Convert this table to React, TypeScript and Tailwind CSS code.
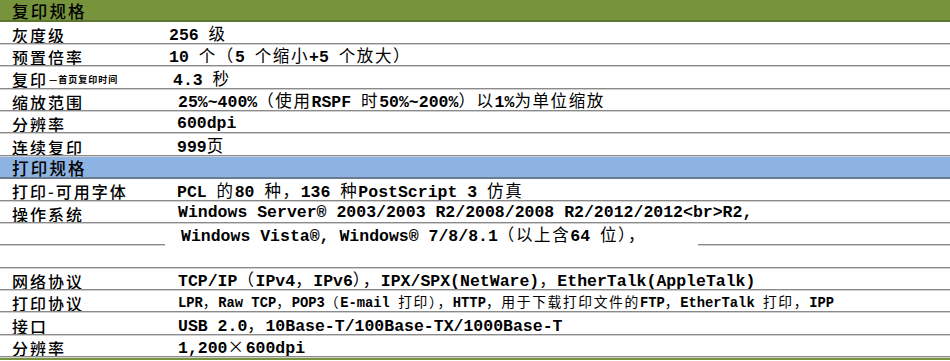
type Row = {
  label: string;
  note?: string;
  value?: string;
  indent?: string;
  small?: boolean;
  cut?: boolean;
};

const copyRows: Row[] = [
  { label: "灰度级", value: "256 级", indent: "pl-[169px]" },
  { label: "预置倍率", value: "10 个（5 个缩小+5 个放大）", indent: "pl-[169px]" },
  { label: "复印", note: "—首页复印时间", value: "4.3 秒", indent: "pl-[173px]" },
  {
    label: "缩放范围",
    value: "25%~400%（使用RSPF 时50%~200%）以1%为单位缩放",
    indent: "pl-[178px]",
  },
  { label: "分辨率", value: "600dpi", indent: "pl-[177px]" },
  { label: "连续复印", value: "999页", indent: "pl-[177px]" },
];

const printRows: Row[] = [
  { label: "打印-可用字体", value: "PCL 的80 种，136 种PostScript 3 仿真", indent: "pl-[177px]" },
  {
    label: "操作系统",
    value: "Windows Server® 2003/2003 R2/2008/2008 R2/2012/2012<br>R2,",
    indent: "pl-[178px]",
  },
  { label: "", value: "Windows Vista®, Windows® 7/8/8.1（以上含64 位），", indent: "pl-[181px]", cut: true },
  { label: "" },
  {
    label: "网络协议",
    value: "TCP/IP（IPv4，IPv6），IPX/SPX(NetWare)，EtherTalk(AppleTalk)",
    indent: "pl-[178px]",
  },
  {
    label: "打印协议",
    value: "LPR，Raw TCP，POP3（E-mail 打印），HTTP，用于下载打印文件的FTP，EtherTalk 打印，IPP",
    indent: "pl-[178px]",
    small: true,
  },
  { label: "接口", value: "USB 2.0，10Base-T/100Base-TX/1000Base-T", indent: "pl-[178px]" },
  { label: "分辨率", value: "1,200×600dpi", indent: "pl-[178px]" },
];

const CJK = /[\u3000-\u9fff\uff00-\uffef\u00d7]/;

// Latin runs in a bold mono face, CJK runs wider and lighter, like the scanned sheet
function Mixed({ text }: { text: string }) {
  const parts = text.split(/([\u3000-\u9fff\uff00-\uffef\u00d7]+)/);
  return (
    <>
      {parts.map((p, i) =>
        CJK.test(p) ? (
          <span key={i} className="font-normal tracking-[1.6px] [font-family:'Noto_Sans_CJK_SC',sans-serif]">
            {p}
          </span>
        ) : (
          <span key={i}>{p}</span>
        ),
      )}
    </>
  );
}

function SectionHeader({ title, color }: { title: string; color: "green" | "blue" }) {
  const bg =
    color === "green"
      ? "bg-[#77933c] border-b-2 border-[#5b7530]"
      : "bg-[#8db3e2] border-b-2 border-[#6b7b90]";
  return (
    <div
      className={`flex h-[22.4px] items-center pl-3 pt-[2px] text-[16.5px] font-medium leading-none tracking-[2.2px] text-black [font-family:'Noto_Sans_CJK_SC',sans-serif] ${bg}`}
    >
      {title}
    </div>
  );
}

function SpecRow({ row }: { row: Row }) {
  return (
    <div className="relative flex h-[22.4px] items-center pt-[2px]">
      <div className="absolute left-3 top-0 flex h-full items-center pt-[2px] text-[16px] font-medium leading-none tracking-[2px] text-black [font-family:'Noto_Sans_CJK_SC',sans-serif]">
        {row.label}
        {row.note && <span className="ml-px text-[9px] font-bold tracking-[1px]">{row.note}</span>}
      </div>
      {row.value && (
        <div
          className={`whitespace-nowrap font-bold leading-none text-black [font-family:'Liberation_Mono','Noto_Sans_CJK_SC',monospace] ${
            row.small ? "text-[13.8px]" : "text-[16.5px]"
          } ${row.indent ?? ""}`}
        >
          <Mixed text={row.value} />
        </div>
      )}
      {row.cut ? (
        <>
          <div className="absolute bottom-0 left-0 h-[2px] w-[165px] border-t border-[#8a8a8a] bg-[#d0d0d0]" />
          <div className="absolute bottom-0 left-[698px] right-0 h-[2px] border-t border-[#8a8a8a] bg-[#d0d0d0]" />
        </>
      ) : (
        <div className="absolute bottom-0 left-0 right-0 h-[2px] border-t border-[#8a8a8a] bg-[#d0d0d0]" />
      )}
    </div>
  );
}

export default function App() {
  return (
    <div className="h-[361px] w-[950px] overflow-hidden bg-white">
      <SectionHeader title="复印规格" color="green" />
      {copyRows.map((r, i) => (
        <SpecRow key={`c${i}`} row={r} />
      ))}
      <SectionHeader title="打印规格" color="blue" />
      {printRows.map((r, i) => (
        <SpecRow key={`p${i}`} row={r} />
      ))}
      <div className="h-[2px] bg-[#77933c]" />
    </div>
  );
}
